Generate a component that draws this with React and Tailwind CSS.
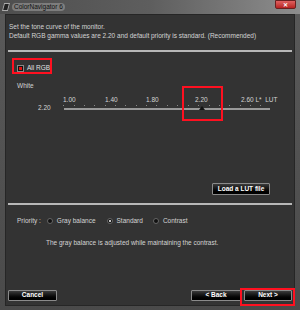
const font = { fontFamily: '"Liberation Sans", Arial, sans-serif' };

const Btn = ({ children, className = "" }) => (
  <button
    className={
      "h-[11px] flex items-center justify-center border border-[#8a8a8a] rounded-[1px] bg-gradient-to-b from-[#3c3c3c] via-[#111] to-[#000] text-white text-[6.5px] font-bold leading-none " +
      className
    }
  >
    {children}
  </button>
);

const Radio = ({ label, checked }) => (
  <div className="flex items-center gap-[4px]">
    <span className="w-[6px] h-[6px] rounded-full bg-[#111] border border-[#666] flex items-center justify-center">
      {checked && <span className="w-[2px] h-[2px] rounded-full bg-white" />}
    </span>
    <span>{label}</span>
  </div>
);

const ticks = [63, 74, 84, 94, 105, 115, 125, 136, 146, 156, 167, 177, 188, 198, 209, 219, 229, 240, 250, 260];

const App = () => {
  return (
    <div
      className="w-[300px] h-[310px] bg-gradient-to-b from-[#5a5a5a] to-[#4a4a4a] flex flex-col text-[#d4d4d4] text-[6.5px] leading-none overflow-hidden relative"
      style={font}
    >
      {/* title bar */}
      <div className="h-[14px] flex items-center pl-[3px] bg-gradient-to-r from-[#4e4e4e] via-[#5e5e5e] to-[#8e8e8e] relative">
        <div className="w-[6px] h-[8px] bg-[#222] border border-[#aaa] skew-x-[-15deg]" />
        <span className="ml-[3px] px-[2px] py-[1px] rounded bg-[#9a9a9a]/60 text-[#111] text-[6.5px]">ColorNavigator 6</span>
        <div className="absolute right-[4px] top-0 w-[21px] h-[9px] rounded-b-[2px] bg-gradient-to-b from-[#e06060] to-[#b82020] border border-[#6a2020] flex items-center justify-center text-white text-[6px] font-bold">
          ✕
        </div>
      </div>

      {/* body */}
      <div className="mx-[5px] flex-1 mb-[4px] bg-[#333] border border-[#262626] flex flex-col relative">
        <div className="pl-[3px] pt-[9px] flex flex-col gap-[2px]">
          <p>Set the tone curve of the monitor.</p>
          <p>Default RGB gamma values are 2.20 and default priority is standard. (Recommended)</p>
        </div>
        <div className="mx-[2px] mt-[11px] h-[2px] bg-[#b8b8b8]" />

        {/* All RGB */}
        <div className="mt-[13px] ml-[11px] flex items-center gap-[3px]">
          <span className="w-[7px] h-[7px] bg-[#111] border border-[#888] flex items-center justify-center">
            <span className="w-[3px] h-[3px] bg-[#e01010]" />
          </span>
          <span className="text-[#e0e0e0]">All RGB</span>
        </div>

        <p className="mt-[11px] ml-[11px]">White</p>

        {/* slider */}
        <div className="mt-[7px] relative h-[16px]">
          <span className="absolute left-[57px] top-0">1.00</span>
          <span className="absolute left-[99px] top-0">1.40</span>
          <span className="absolute left-[140px] top-0">1.80</span>
          <span className="absolute left-[189px] top-0">2.20</span>
          <span className="absolute left-[235px] top-0">2.60 L* &nbsp;LUT</span>
          <span className="absolute left-[32px] top-[8px]">2.20</span>
          {ticks.map((x) => (
            <span key={x} className="absolute top-[8px] w-px h-px bg-[#888]" style={{ left: x - 6 }} />
          ))}
          <div className="absolute left-[58px] top-[11px] w-[206px] h-[2px] bg-[#9a9a9a]" />
          <div className="absolute left-[193px] top-[9px] w-0 h-0 border-l-[3px] border-r-[3px] border-b-[4px] border-l-transparent border-r-transparent border-b-[#111]" />
        </div>

        <div className="flex-1" />
        <div className="flex justify-end pr-[24px]">
          <Btn className="w-[58px] h-[12px]">Load a LUT file</Btn>
        </div>
        <div className="mx-[2px] mt-[8px] h-[2px] bg-[#b8b8b8]" />

        <div className="mt-[13px] ml-[11px] flex items-center">
          <span className="mr-[6px]">Priority :</span>
          <Radio label="Gray balance" />
          <span className="w-[11px]" />
          <Radio label="Standard" checked />
          <span className="w-[10px]" />
          <Radio label="Contrast" />
        </div>
        <p className="mt-[15px] ml-[40px]">The gray balance is adjusted while maintaining the contrast.</p>

        <div className="mt-[42px] flex items-center px-[2px] pb-[3px] h-[17px]">
          <Btn className="w-[49px]">Cancel</Btn>
          <div className="flex-1" />
          <Btn className="w-[50px]">&lt; Back</Btn>
          <span className="w-[3px]" />
          <Btn className="w-[48px]">Next &gt;</Btn>
        </div>
      </div>

      {/* annotation boxes */}
      <div className="absolute left-[12px] top-[58px] w-[40px] h-[16px] border-2 border-[#ff1020]" />
      <div className="absolute left-[182px] top-[86px] w-[41px] h-[35px] border-2 border-[#ff1020]" />
      <div className="absolute left-[240px] top-[288px] w-[55px] h-[18px] border-2 border-[#ff1020]" />
    </div>
  );
};

export default App;
